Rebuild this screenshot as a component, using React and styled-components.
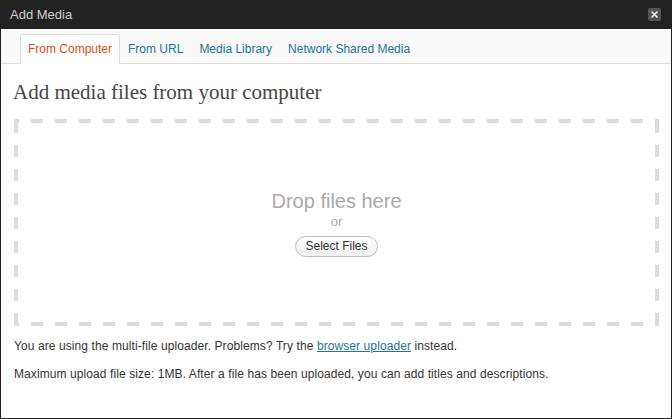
import React from "react";
import styled, { createGlobalStyle } from "styled-components";

const Global = createGlobalStyle`
  html, body { margin: 0; padding: 0; }
  body {
    background: #fff;
    font-family: "Liberation Sans", Arial, sans-serif;
  }
`;

const Frame = styled.div({
  width: "672px",
  height: "419px",
  boxSizing: "border-box",
  border: "1px solid #222",
  borderTop: "none",
  display: "flex",
  flexDirection: "column",
  background: "#fff",
  overflow: "hidden",
});

const TitleBar = styled.div({
  height: "29px",
  flexShrink: 0,
  background: "#222",
  display: "flex",
  alignItems: "center",
  justifyContent: "space-between",
  padding: "0 11px 0 10px",
  margin: "0 -1px",
  color: "#cfcfcf",
  fontSize: "13px",
});

const CloseButton = styled.div({
  width: "13px",
  height: "13px",
  background: "#555",
  borderRadius: "2px",
  display: "flex",
  alignItems: "center",
  justifyContent: "center",
});

const Tabs = styled.div({
  height: "35px",
  flexShrink: 0,
  background: "#f9f9f9",
  borderBottom: "1px solid #dfdfdf",
  display: "flex",
  alignItems: "flex-end",
  paddingLeft: "19px",
  boxSizing: "border-box",
});

const Tab = styled.div`
  font-size: 12px;
  padding: 0 7px;
  height: 30px;
  line-height: 28px;
  box-sizing: border-box;
  color: ${({ active }) => (active ? "#d54e21" : "#21759b")};
  background: ${({ active }) => (active ? "#fff" : "transparent")};
  border: 1px solid ${({ active }) => (active ? "#dfdfdf" : "transparent")};
  border-bottom: none;
  border-radius: 3px 3px 0 0;
  margin-bottom: -1px;
`;

const Body = styled.div({
  padding: "0 12px",
  display: "flex",
  flexDirection: "column",
});

const Heading = styled.h3({
  fontFamily: '"Liberation Serif", Georgia, serif',
  fontWeight: "normal",
  fontSize: "21px",
  color: "#464646",
  margin: "16px 0 15px 0",
  lineHeight: "24px",
});

const DropZone = styled.div`
  height: 207px;
  margin-left: 1px;
  margin-right: 0;
  display: flex;
  flex-direction: column;
  align-items: center;
  justify-content: center;
  background-image:
    linear-gradient(to right, #dcdcdc 12px, transparent 12px),
    linear-gradient(to right, #dcdcdc 12px, transparent 12px),
    linear-gradient(to bottom, #dcdcdc 12px, transparent 12px),
    linear-gradient(to bottom, #dcdcdc 12px, transparent 12px);
  background-size: 24px 4px, 24px 4px, 4px 24px, 4px 24px;
  background-repeat: repeat-x, repeat-x, repeat-y, repeat-y;
  background-position: 17px 0, 17px 100%, 0 2px, 100% 2px;
`;

const DropText = styled.div({
  fontSize: "20px",
  color: "#aaa",
  lineHeight: "24px",
});

const OrText = styled.div({
  fontSize: "13px",
  color: "#aaa",
  lineHeight: "18px",
  marginBottom: "5px",
});

const SelectButton = styled.button({
  fontFamily: '"Liberation Sans", Arial, sans-serif',
  fontSize: "12px",
  color: "#333",
  height: "21px",
  padding: "0 9px",
  border: "1px solid #bbb",
  borderRadius: "11px",
  background: "linear-gradient(#fefefe, #f0f0f0)",
});

const Note = styled.p`
  font-size: 12px;
  color: #333;
  margin: ${({ gap }) => gap}px 0 0 1px;
  line-height: 18px;
  letter-spacing: 0.09px;
`;

const Link = styled.a({
  color: "#21759b",
  textDecoration: "underline",
});

export default function App() {
  return (
    <>
      <Global />
      <Frame>
        <TitleBar>
          <span>Add Media</span>
          <CloseButton>
            <svg width="9" height="9" viewBox="0 0 9 9">
              <path d="M1.5 1.5 L7.5 7.5 M7.5 1.5 L1.5 7.5" stroke="#eee" strokeWidth="1.6" />
            </svg>
          </CloseButton>
        </TitleBar>
        <Tabs>
          <Tab active>From Computer</Tab>
          <Tab>From URL</Tab>
          <Tab>Media Library</Tab>
          <Tab>Network Shared Media</Tab>
        </Tabs>
        <Body>
          <Heading>Add media files from your computer</Heading>
          <DropZone>
            <DropText>Drop files here</DropText>
            <OrText>or</OrText>
            <SelectButton>Select Files</SelectButton>
          </DropZone>
          <Note gap={11}>
            You are using the multi-file uploader. Problems? Try the{" "}
            <Link href="#">browser uploader</Link> instead.
          </Note>
          <Note gap={10}>
            Maximum upload file size: 1MB. After a file has been uploaded, you can add titles and descriptions.
          </Note>
        </Body>
      </Frame>
    </>
  );
}
